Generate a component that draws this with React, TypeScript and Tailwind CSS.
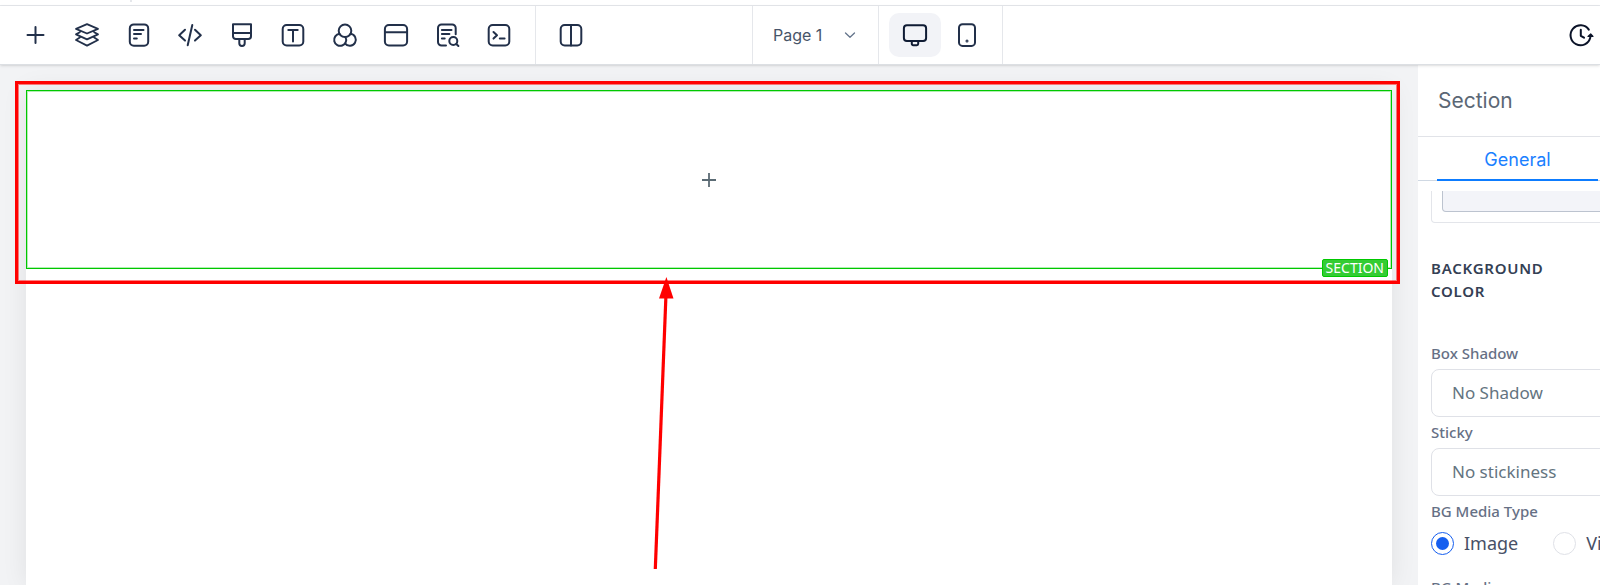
import { useState } from "react";
import type { ReactNode } from "react";

interface IconProps {
  children: ReactNode;
  className?: string;
}

function Icon({ children, className = "text-[#22304a]" }: IconProps) {
  return (
    <svg
      viewBox="0 0 24 24"
      className={`size-6 shrink-0 overflow-visible ${className}`}
      fill="none"
      stroke="currentColor"
      strokeWidth="2"
      strokeLinecap="round"
      strokeLinejoin="round"
      aria-hidden="true"
    >
      {children}
    </svg>
  );
}

const tools: { label: string; icon: ReactNode }[] = [
  { label: "Add", icon: <path d="M11.500 4v16M3.500 12h16" /> },
  {
    label: "Layers",
    icon: (
      <path
        strokeWidth="1.800"
        d="M12 1.200l11 4.600-11 4.700L1 5.800zM4.800 9.200L1 11.400l11 5 11-5-3.800-2.200M4.800 14.600L1 17l11 5.600L23 17l-3.800-2.400"
      />
    ),
  },
  {
    label: "Pages",
    icon: (
      <>
        <rect x="2.800" y="1.400" width="18.400" height="21.400" rx="4" />
        <path d="M7 6.900h9.500M7 10.900h7M7 15.400h2.800" />
      </>
    ),
  },
  { label: "Custom code", icon: <path d="M7 6.800L1.200 12.200 7 17.600M17 6.800l5.800 5.400-5.800 5.400M14.300 2L9.700 22.200" /> },
  {
    label: "Styles",
    icon: (
      <path d="M3 1.300h18v12a2.800 2.800 0 0 1-2.800 2.800H5.800A2.800 2.800 0 0 1 3 13.300zM3 9.900h18M9.300 16.100v4.200a2.700 2.700 0 0 0 5.400 0v-4.200" />
    ),
  },
  {
    label: "Typography",
    icon: (
      <>
        <rect x="1.700" y="2" width="20.600" height="20.400" rx="4" />
        <path d="M7.300 7h9.400M12 7v11.400" />
      </>
    ),
  },
  {
    label: "Colors",
    icon: (
      <>
        <circle cx="12" cy="7.800" r="6.300" />
        <path d="M6.500 10.850A6 6 0 1 0 12.500 14.100M17.500 10.850A6 6 0 1 1 12 20.400" />
      </>
    ),
  },
  {
    label: "Popup",
    icon: (
      <>
        <rect x="0.900" y="2" width="22.200" height="20.400" rx="4" />
        <path d="M1 9.200h22" />
      </>
    ),
  },
  {
    label: "SEO",
    icon: (
      <>
        <path d="M10 22.600H5.500A3.500 3.500 0 0 1 2 19.100V4.900a3.500 3.500 0 0 1 3.500-3.500h10.700a3.500 3.500 0 0 1 3.500 3.500v6.300M5.900 6.900h9.600M5.900 11h7.500M5.900 15.400h2.800" />
        <circle cx="17.300" cy="18" r="4" />
        <path d="M20.300 21l2.100 2" />
      </>
    ),
  },
  {
    label: "Tracking code",
    icon: (
      <>
        <rect x="1.700" y="2" width="20.600" height="20.400" rx="4" />
        <path d="M6.500 9l3.500 3.300-3.500 3.300M12.800 15.500h4.800" />
      </>
    ),
  },
];

function Divider() {
  return <div className="w-px shrink-0 self-stretch bg-[#e5e7eb]" />;
}

function Toolbar() {
  return (
    <div className="relative z-10 flex h-[59px] items-center border-b border-[#dcdfe3] bg-white shadow-sm">
      <div className="flex w-[535px] shrink-0 items-center justify-between px-6">
        {tools.map((tool) => (
          <button key={tool.label} type="button" aria-label={tool.label}>
            <Icon>{tool.icon}</Icon>
          </button>
        ))}
      </div>
      <Divider />
      <div className="flex w-[216px] shrink-0 items-center px-[23px]">
        <button type="button" aria-label="Split view">
          <Icon>
            <rect x="1.700" y="2" width="20.600" height="20.400" rx="4" />
            <path d="M12 2v20.400" />
          </Icon>
        </button>
      </div>
      <Divider />
      <div className="relative flex w-[125px] shrink-0 items-center">
        <select
          aria-label="Page"
          className="w-full appearance-none bg-transparent pl-5 text-base text-[#475569] outline-none"
        >
          <option>Page 1</option>
        </select>
        <svg
          viewBox="0 0 12 12"
          className="pointer-events-none absolute right-[22px] size-3 text-[#64748b]"
          fill="none"
          stroke="currentColor"
          strokeWidth="1.300"
          strokeLinecap="round"
          strokeLinejoin="round"
          aria-hidden="true"
        >
          <path d="M1.500 4L6 8.200 10.500 4" />
        </svg>
      </div>
      <Divider />
      <div className="flex w-[123px] shrink-0 items-center pl-[10px]">
        <button
          type="button"
          aria-label="Desktop"
          className="flex h-11 w-[52px] items-center justify-center rounded-[10px] bg-[#f2f3f7]"
        >
          <Icon className="text-[#0f1b33]">
            <rect x="0.900" y="2.200" width="22.200" height="15.800" rx="3" />
            <path d="M8.800 18v2.800a1.400 1.400 0 0 0 1.400 1.400h3.600a1.400 1.400 0 0 0 1.400-1.400V18" />
          </Icon>
        </button>
        <button type="button" aria-label="Mobile" className="flex h-11 w-[52px] items-center justify-center">
          <Icon>
            <rect x="4" y="1.300" width="16" height="21.600" rx="3.500" />
            <circle cx="12" cy="18" r="0.500" fill="currentColor" />
          </Icon>
        </button>
      </div>
      <Divider />
      <button type="button" aria-label="Version history" className="mr-[7px] ml-auto">
        <Icon className="text-[#0b1328]">
          <path d="M19.800 6.600A10 10 0 1 0 21.300 14.500M11.800 6.800v6l3.200 1.900" />
          <path d="M19 13.400l2.700-2.400 2.300 2.400z" fill="currentColor" strokeWidth="1.200" />
        </Icon>
      </button>
    </div>
  );
}

function Canvas() {
  return (
    <div className="relative min-w-0 flex-1 bg-[#f2f3f5] px-[26px] pt-[25px]">
      <div className="h-full bg-white shadow-[0_0_24px_rgba(0,0,0,0.08)]">
        <div className="relative flex h-[179px] items-center justify-center border border-[#00c800] bg-white shadow-[inset_0_0_0_1px_rgba(0,200,0,0.3)]">
          <button type="button" aria-label="Add element">
            <svg viewBox="0 0 14 14" className="size-[14px] text-[#5b6b74]" fill="none" stroke="currentColor" strokeWidth="1.800">
              <path d="M7 0v14M0 7h14" />
            </svg>
          </button>
          <span className="absolute right-[3px] -bottom-[9px] rounded-[2px] border border-[#00c800] bg-[#33cc33] px-[3px] font-['Noto_Sans'] text-sm leading-4 text-white">
            SECTION
          </span>
        </div>
      </div>
      {/* highlight around the selected section */}
      <div className="pointer-events-none absolute top-4 right-[18px] left-[15px] h-[203px] border-[3px] border-[#ff0000] shadow-[inset_0_0_0_1px_rgba(255,0,0,0.5)]" />
      <svg viewBox="0 0 24 294" className="pointer-events-none absolute top-[211px] left-[652px] h-[294px] w-6" aria-hidden="true">
        <path d="M14 18L3.300 293" stroke="#ff0000" strokeWidth="3.200" />
        <path d="M14.400 1L21.500 22.500H7z" fill="#ff0000" />
      </svg>
    </div>
  );
}

interface SelectFieldProps {
  id: string;
  label: string;
  option: string;
}

function SelectField({ id, label, option }: SelectFieldProps) {
  return (
    <div className="flex flex-col">
      <label htmlFor={id} className="h-[31px] text-[15px] leading-[31px] font-medium text-[#667085]">
        {label}
      </label>
      <select
        id={id}
        className="h-12 appearance-none rounded-lg border border-[#dfe1e7] bg-white px-5 text-[17px] text-[#64747f] outline-none"
      >
        <option>{option}</option>
      </select>
    </div>
  );
}

function MediaRadio({ label, checked, onChange }: { label: string; checked: boolean; onChange: () => void }) {
  return (
    <label className="flex items-center gap-[10px] text-lg text-[#475066]">
      <input
        type="radio"
        name="media"
        checked={checked}
        onChange={onChange}
        className="size-[23px] shrink-0 appearance-none rounded-full border border-[#dfe1e7] bg-white bg-clip-content p-[4px] checked:border-[#155eef] checked:bg-[#155eef]"
      />
      {label}
    </label>
  );
}

function Sidebar() {
  const [media, setMedia] = useState("Image");

  return (
    <aside className="w-[182px] shrink-0 overflow-hidden bg-white">
      <div className="w-[360px]">
        <h2 className="flex h-[72px] items-center border-b border-[#e1e3e8] px-5 text-[21px] text-[#5b6775]">
          Section
        </h2>
        <div className="flex h-11 border-b border-[#cfd8e3] px-[19px]">
          <button type="button" className="-mb-px w-[161px] border-b-2 border-[#0d7cff] pt-1 text-lg text-[#1a80ff]">
            General
          </button>
        </div>
        <div className="px-[13px] pt-[10px] font-['Noto_Sans']">
          <div className="h-8 rounded-b-sm border border-t-0 border-[#e3e5ea] px-[10px]">
            <div className="h-[21px] rounded-b-sm border border-t-0 border-[#bcc3cf] bg-[#f3f4f9]" />
          </div>
          <h3 className="mt-[34px] w-[120px] text-[15px] leading-[23px] font-semibold tracking-wider text-[#344054]">
            BACKGROUND COLOR
          </h3>
          <div className="mt-[35px]">
            <SelectField id="shadow" label="Box Shadow" option="No Shadow" />
            <SelectField id="sticky" label="Sticky" option="No stickiness" />
          </div>
          <fieldset>
            <legend className="h-[31px] text-[15px] leading-[31px] font-medium text-[#667085]">BG Media Type</legend>
            <div className="flex h-8 items-center gap-[35px]">
              <MediaRadio label="Image" checked={media === "Image"} onChange={() => setMedia("Image")} />
              <MediaRadio label="Video" checked={media === "Video"} onChange={() => setMedia("Video")} />
            </div>
          </fieldset>
          <h4 className="mt-5 text-[15px] leading-4 font-medium text-[#667085]">BG Media</h4>
        </div>
      </div>
    </aside>
  );
}

export default function App() {
  return (
    <div className="flex h-screen flex-col overflow-hidden bg-white font-['Inter',sans-serif]">
      <div className="h-[6px] shrink-0 border-b border-[#e5e7eb] pl-[130px]">
        <div className="h-[2px] w-[2px] bg-[#e5e7eb]" />
      </div>
      <Toolbar />
      <div className="flex min-h-0 flex-1">
        <Canvas />
        <Sidebar />
      </div>
    </div>
  );
}
